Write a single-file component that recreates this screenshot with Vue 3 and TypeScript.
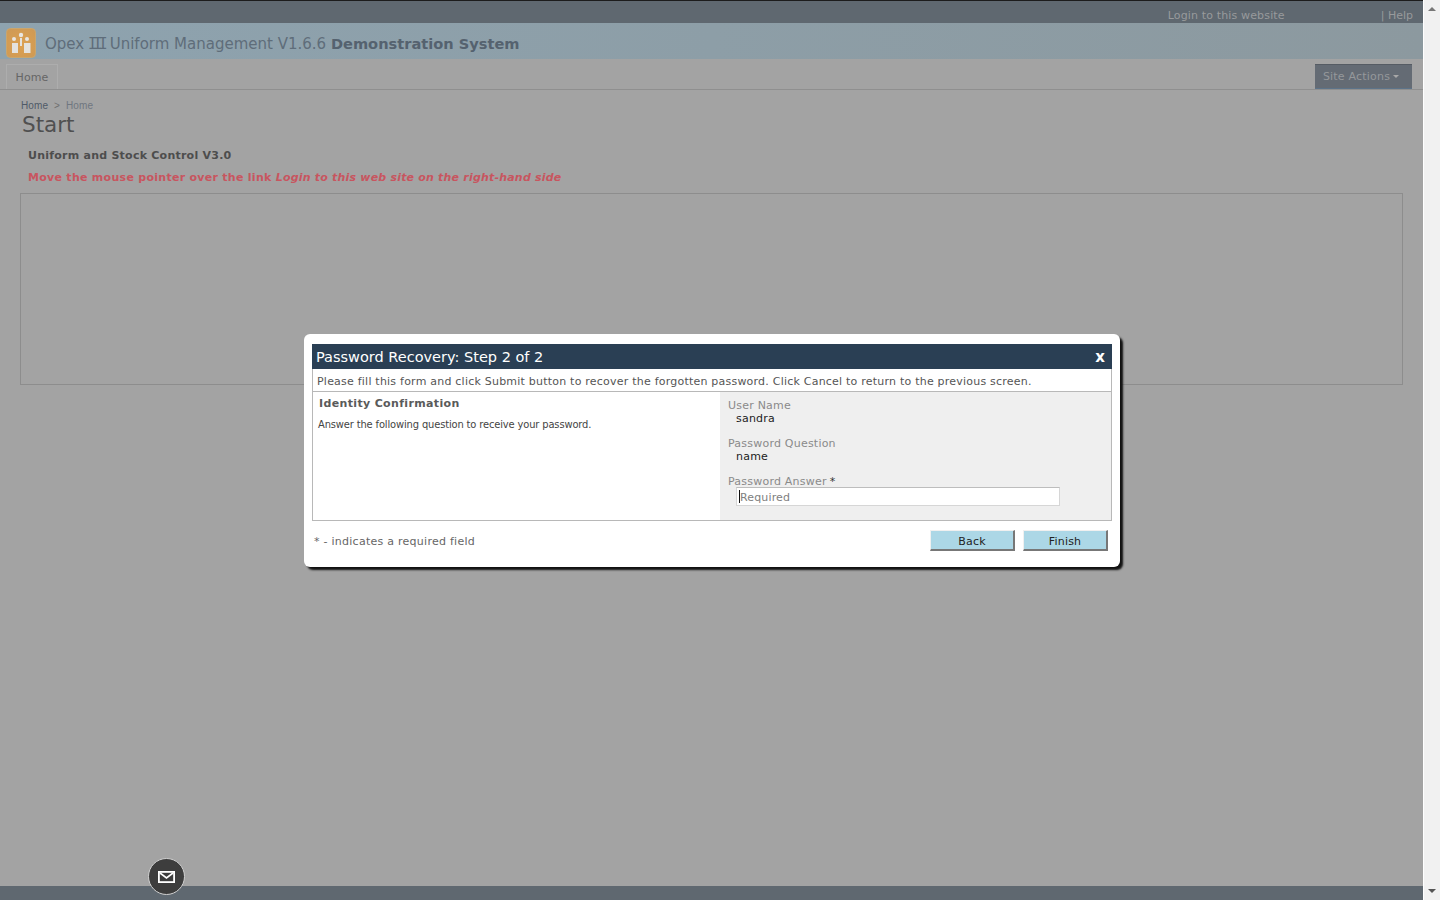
<template>
  <div class="window">
    <div class="page">
      <div class="top-bar">
        <a class="top-link">Login to this website</a>
        <span class="top-help">| Help</span>
      </div>
      <header class="site-header">
        <svg class="logo" width="30" height="30" viewBox="0 0 30 30">
          <defs>
            <radialGradient id="logoFill" cx="50%" cy="55%" r="65%">
              <stop offset="0%" stop-color="#dca050" />
              <stop offset="100%" stop-color="#cf9a55" />
            </radialGradient>
          </defs>
          <rect x="0.5" y="0.5" width="29" height="29" rx="4" fill="url(#logoFill)" stroke="#c9a66e" />
          <circle cx="8" cy="11" r="2" fill="#e8e6e2" />
          <circle cx="15" cy="7" r="2.2" fill="#e8e6e2" />
          <circle cx="21" cy="11" r="2" fill="#e8e6e2" />
          <rect x="6" y="15" width="6" height="10" fill="#e4e2de" />
          <rect x="14" y="10" width="2" height="8" fill="#e4e2de" />
          <rect x="18" y="15" width="6.5" height="10" fill="#e4e2de" />
        </svg>
        <h1 class="site-title">Opex <span class="roman">III</span> Uniform Management V1.6.6 <b>Demonstration System</b></h1>
      </header>
      <nav class="site-nav">
        <span class="nav-tab">Home</span>
        <button class="site-actions">Site Actions<i class="caret"></i></button>
      </nav>
      <main class="content">
        <div class="crumbs"><span class="crumb-a">Home</span><span class="crumb-sep">&gt;</span><span>Home</span></div>
        <h2 class="page-title">Start</h2>
        <p class="version">Uniform and Stock Control V3.0</p>
        <p class="hint">Move the mouse pointer over the link <em>Login to this web site on the right-hand side</em></p>
        <div class="frame"></div>
      </main>
      <footer class="site-footer"></footer>

      <div class="chat-btn">
        <svg width="17" height="12" viewBox="0 0 17 12">
          <rect x="0.9" y="0.9" width="15.2" height="10.2" fill="none" stroke="#fff" stroke-width="1.8" />
          <path d="M2 2 L8.5 7 L15 2" fill="none" stroke="#fff" stroke-width="1.6" />
        </svg>
      </div>

      <div class="modal-layer">
        <section class="modal">
          <div class="modal-title">
            <span>Password Recovery: Step 2 of 2</span>
            <span class="modal-close">x</span>
          </div>
          <div class="modal-box">
            <div class="modal-intro">Please fill this form and click Submit button to recover the forgotten password. Click Cancel to return to the previous screen.</div>
            <div class="modal-body">
              <div class="side-text">
                <h3>Identity Confirmation</h3>
                <p>Answer the following question to receive your password.</p>
              </div>
              <div class="fields">
                <div v-for="f in fields" :key="f.label" class="field">
                  <label>{{ f.label }}</label>
                  <div class="value">{{ f.value }}</div>
                </div>
                <div class="field">
                  <label>Password Answer<span class="req">*</span></label>
                  <div class="input-wrap">
                    <input type="text" placeholder="Required" />
                  </div>
                </div>
              </div>
            </div>
          </div>
          <div class="modal-foot">
            <span class="foot-note">* - indicates a required field</span>
            <div class="foot-btns">
              <button class="btn">Back</button>
              <button class="btn">Finish</button>
            </div>
          </div>
        </section>
      </div>
    </div>
    <div class="scrollbar">
      <i class="arrow-up"></i>
      <i class="arrow-down"></i>
    </div>
  </div>
</template>

<script setup lang="ts">
const fields = [
  { label: 'User Name', value: 'sandra' },
  { label: 'Password Question', value: 'name' }
];
</script>

<style>
html,
body {
  margin: 0;
  overflow: hidden;
}
</style>

<style scoped>
.window {
  display: flex;
  width: 1440px;
  height: 900px;
  font-family: "DejaVu Sans", Verdana, sans-serif;
  background: #a3a3a3;
}

.page {
  position: relative;
  flex: 1;
  display: flex;
  flex-direction: column;
  min-width: 0;
}

.top-bar {
  height: 23px;
  box-sizing: border-box;
  border-top: 1px solid #1c1c1c;
  background: #5f6870;
  display: flex;
  justify-content: flex-end;
  align-items: flex-end;
  padding: 0 10px 1px 0;
  font-size: 11px;
  color: #989a9c;
}

.top-link {
  margin-right: 96px;
  letter-spacing: 0.15px;
}

.site-header {
  height: 36px;
  background: linear-gradient(90deg, #8ea3af, #8c999f);
  display: flex;
  align-items: center;
  padding-left: 6px;
  gap: 9px;
}

.logo {
  margin-top: 4px;
  flex: none;
}

.site-title {
  margin: 6px 0 0;
  font-size: 15px;
  font-weight: 400;
  color: #5f6d7a;
}

.roman {
  font-family: "DejaVu Sans Mono", monospace;
  letter-spacing: -3.7px;
  margin: 0 1px 0 -1px;
}

.site-title b {
  font-size: 14.6px;
  color: #55626f;
}

.site-nav {
  height: 31px;
  box-sizing: border-box;
  border-bottom: 1px solid #8f8f8f;
  display: flex;
  justify-content: space-between;
  align-items: flex-end;
  padding: 0 11px 0 6px;
}

.nav-tab {
  box-sizing: border-box;
  height: 25px;
  width: 52px;
  border: 1px solid #adadad;
  border-bottom: 0;
  text-align: center;
  line-height: 25px;
  font-size: 11px;
  letter-spacing: 0.1px;
  color: #666;
}

.site-actions {
  height: 25px;
  width: 97px;
  padding: 0 5px 0 0;
  border: 0;
  border-top: 1px solid #565c64;
  border-bottom: 1px solid #5c7389;
  background: #646b74;
  color: #95989b;
  font: 11px "DejaVu Sans", Verdana, sans-serif;
  letter-spacing: 0.2px;
}

.caret {
  display: inline-block;
  margin-left: 3px;
  vertical-align: 2px;
  border: 3px solid transparent;
  border-top-color: #a8a8a8;
  border-bottom: 0;
}

.content {
  flex: 1;
  padding: 10px 20px 0;
}

.crumbs {
  font: 10px/12px "Liberation Sans", Arial, sans-serif;
  letter-spacing: 0.1px;
  color: #6f7680;
  padding-left: 1px;
}

.crumb-a {
  color: #4f5a68;
}

.crumb-sep {
  margin: 0 6px;
  color: #6f6f6f;
}

.page-title {
  margin: 1px 0 0 2px;
  font-size: 21.5px;
  line-height: 24px;
  font-weight: 400;
  color: #505050;
}

.version,
.hint {
  margin: 0 0 0 8px;
  font-size: 11px;
  line-height: 14px;
  font-weight: 700;
  letter-spacing: 0.24px;
}

.version {
  margin-top: 12px;
  color: #4d4d4d;
}

.hint {
  margin-top: 8px;
  letter-spacing: 0.28px;
  color: #c8555f;
}

.hint em {
  letter-spacing: 0.2px;
}

.frame {
  box-sizing: border-box;
  width: 1383px;
  height: 192px;
  margin-top: 8px;
  border: 1px solid #8d8d8d;
}

.site-footer {
  height: 14px;
  background: #5f6870;
}

.chat-btn {
  position: absolute;
  left: 148px;
  top: 858px;
  box-sizing: border-box;
  width: 37px;
  height: 37px;
  border-radius: 50%;
  border: 1px solid #d0d0d0;
  background: #3d3d3d;
  display: flex;
  align-items: center;
  justify-content: center;
}

.modal-layer {
  position: absolute;
  inset: 0;
  display: flex;
  align-items: center;
  justify-content: center;
}

.modal {
  box-sizing: border-box;
  width: 816px;
  height: 233px;
  padding: 10px 8px 0;
  margin: 1px 0 0 1px;
  background: #fff;
  border-radius: 6px;
  box-shadow: 3px 3px 2px #111;
  letter-spacing: 0.22px;
}

.modal-title {
  height: 25px;
  background: #2a3f54;
  color: #fff;
  display: flex;
  justify-content: space-between;
  align-items: center;
  padding: 0 7px 0 4px;
  font-size: 14.5px;
  letter-spacing: 0;
}

.modal-close {
  font-weight: 700;
  font-size: 15px;
}

.modal-box {
  border: 1px solid #b8b8b8;
  border-top: 0;
}

.modal-intro {
  height: 23px;
  box-sizing: border-box;
  border-bottom: 1px solid #b8b8b8;
  padding: 1px 0 0 4px;
  font-size: 11px;
  line-height: 23px;
  color: #555;
}

.modal-body {
  display: grid;
  grid-template-columns: 407px 1fr;
  height: 128px;
}

.side-text {
  padding: 5px 6px;
}

.side-text h3 {
  margin: 0;
  font-size: 11px;
  line-height: 13px;
  font-weight: 700;
  letter-spacing: 0.35px;
  color: #5a5a5a;
}

.side-text p {
  margin: 8px 0 0 -1px;
  font: 11px/13px "DejaVu Sans Condensed", Tahoma, sans-serif;
  letter-spacing: -0.13px;
  color: #444;
}

.fields {
  background: #efefef;
  padding: 7px 8px 0;
}

.field {
  margin-bottom: 12px;
  font-size: 11px;
  line-height: 13px;
}

.field label {
  color: #8a8a8a;
  display: block;
}

.value {
  padding-left: 8px;
  color: #222;
}

.req {
  margin-left: 3px;
  color: #333;
}

.input-wrap {
  position: relative;
  margin: -1px 0 0 8px;
  width: 324px;
}

.input-wrap::after {
  content: "";
  position: absolute;
  left: 3px;
  top: 3px;
  width: 1px;
  height: 13px;
  background: #111;
}

.input-wrap input {
  box-sizing: border-box;
  display: block;
  width: 100%;
  height: 19px;
  padding: 2px 2px 0 3px;
  border: 1px solid #d6d6d6;
  border-top-color: #bdbdbd;
  background: #fff;
  font: 11px "DejaVu Sans", Verdana, sans-serif;
  letter-spacing: 0.15px;
  outline: none;
}

.input-wrap input::placeholder {
  color: #808080;
  opacity: 1;
}

.modal-foot {
  display: flex;
  justify-content: space-between;
  align-items: center;
  padding: 9px 4px 0 2px;
}

.foot-note {
  margin-top: 2px;
  font-size: 11px;
  letter-spacing: 0.26px;
  color: #666;
}

.foot-btns {
  display: flex;
  gap: 8px;
}

.btn {
  box-sizing: border-box;
  width: 85px;
  height: 21px;
  padding: 3px 0 0;
  border: 1px solid;
  border-color: #f0f0f0 #777 #777 #f0f0f0;
  border-width: 1px 2px 2px 1px;
  background: #acd7e6;
  color: #222;
  font: 11px "DejaVu Sans", Verdana, sans-serif;
  letter-spacing: 0.2px;
}

.scrollbar {
  width: 17px;
  box-sizing: border-box;
  border-left: 1px solid #fff;
  background: #f1f1f1;
  display: flex;
  flex-direction: column;
  justify-content: space-between;
  align-items: center;
  padding: 7px 0;
}

.arrow-up,
.arrow-down {
  width: 0;
  height: 0;
  border: 4px solid transparent;
}

.arrow-up {
  border-bottom: 4px solid #777;
  border-top: 0;
}

.arrow-down {
  border-top: 4px solid #555;
  border-bottom: 0;
}
</style>
